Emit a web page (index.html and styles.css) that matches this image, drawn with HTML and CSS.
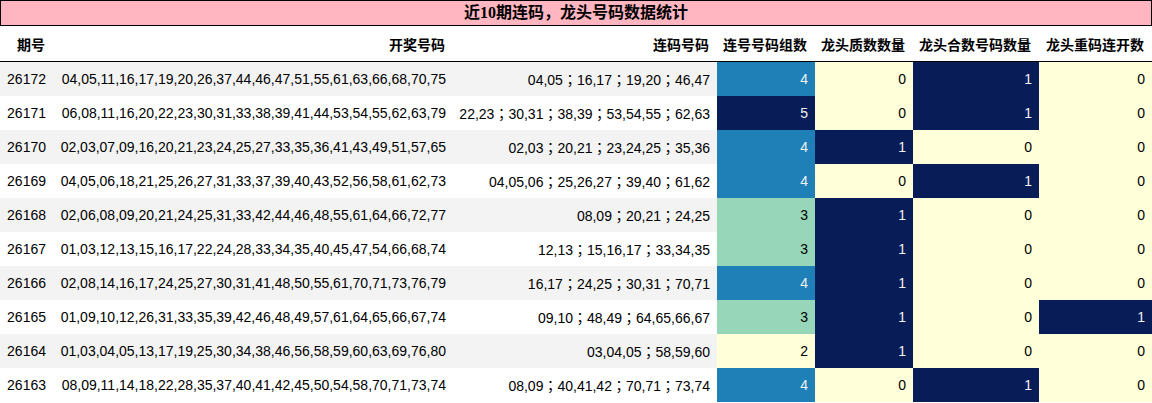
FILE: index.html
```html
<!DOCTYPE html>
<html lang="zh">
<head>
<meta charset="utf-8">
<link rel="stylesheet" href="styles.css">
</head>
<body>
<div class="title">近10期连码，龙头号码数据统计</div>
<table class="stats">
  <colgroup>
    <col class="c1"><col class="c2"><col class="c3"><col class="c4"><col class="c5"><col class="c6"><col class="c7">
  </colgroup>
  <thead>
    <tr><th>期号</th><th>开奖号码</th><th>连码号码</th><th>连号号码组数</th><th>龙头质数数量</th><th>龙头合数号码数量</th><th>龙头重码连开数</th></tr>
  </thead>
  <tbody>
    <tr><td>26172</td><td>04,05,11,16,17,19,20,26,37,44,46,47,51,55,61,63,66,68,70,75</td><td>04,05；16,17；19,20；46,47</td><td class="g4">4</td><td class="b0">0</td><td class="b1">1</td><td class="b0">0</td></tr>
    <tr><td>26171</td><td>06,08,11,16,20,22,23,30,31,33,38,39,41,44,53,54,55,62,63,79</td><td>22,23；30,31；38,39；53,54,55；62,63</td><td class="g5">5</td><td class="b0">0</td><td class="b1">1</td><td class="b0">0</td></tr>
    <tr><td>26170</td><td>02,03,07,09,16,20,21,23,24,25,27,33,35,36,41,43,49,51,57,65</td><td>02,03；20,21；23,24,25；35,36</td><td class="g4">4</td><td class="b1">1</td><td class="b0">0</td><td class="b0">0</td></tr>
    <tr><td>26169</td><td>04,05,06,18,21,25,26,27,31,33,37,39,40,43,52,56,58,61,62,73</td><td>04,05,06；25,26,27；39,40；61,62</td><td class="g4">4</td><td class="b0">0</td><td class="b1">1</td><td class="b0">0</td></tr>
    <tr><td>26168</td><td>02,06,08,09,20,21,24,25,31,33,42,44,46,48,55,61,64,66,72,77</td><td>08,09；20,21；24,25</td><td class="g3">3</td><td class="b1">1</td><td class="b0">0</td><td class="b0">0</td></tr>
    <tr><td>26167</td><td>01,03,12,13,15,16,17,22,24,28,33,34,35,40,45,47,54,66,68,74</td><td>12,13；15,16,17；33,34,35</td><td class="g3">3</td><td class="b1">1</td><td class="b0">0</td><td class="b0">0</td></tr>
    <tr><td>26166</td><td>02,08,14,16,17,24,25,27,30,31,41,48,50,55,61,70,71,73,76,79</td><td>16,17；24,25；30,31；70,71</td><td class="g4">4</td><td class="b1">1</td><td class="b0">0</td><td class="b0">0</td></tr>
    <tr><td>26165</td><td>01,09,10,12,26,31,33,35,39,42,46,48,49,57,61,64,65,66,67,74</td><td>09,10；48,49；64,65,66,67</td><td class="g3">3</td><td class="b1">1</td><td class="b0">0</td><td class="b1">1</td></tr>
    <tr><td>26164</td><td>01,03,04,05,13,17,19,25,30,34,38,46,56,58,59,60,63,69,76,80</td><td>03,04,05；58,59,60</td><td class="g2">2</td><td class="b1">1</td><td class="b0">0</td><td class="b0">0</td></tr>
    <tr><td>26163</td><td>08,09,11,14,18,22,28,35,37,40,41,42,45,50,54,58,70,71,73,74</td><td>08,09；40,41,42；70,71；73,74</td><td class="g4">4</td><td class="b0">0</td><td class="b1">1</td><td class="b0">0</td></tr>
  </tbody>
</table>
</body>
</html>
```
FILE: styles.css
```css
html, body {
  margin: 0;
  padding: 0;
  background: #ffffff;
}
body {
  width: 1152px;
}
.title {
  box-sizing: border-box;
  height: 26px;
  border: 1px solid #000;
  background: #ffb6c1;
  font-family: "Liberation Serif", "Noto Sans CJK SC", serif;
  font-weight: bold;
  font-size: 16px;
  line-height: 24px;
  text-align: center;
  color: #000;
}
.stats {
  width: 1152px;
  table-layout: fixed;
  border-collapse: collapse;
  font-family: "Liberation Sans", "Noto Sans CJK JP", sans-serif;
  font-size: 14px;
  color: #000;
}
.c1 { width: 53px; }
.c2 { width: 400px; }
.c3 { width: 264px; }
.c4 { width: 98px; }
.c5 { width: 98px; }
.c6 { width: 126px; }
.c7 { width: 113px; }
.stats th {
  height: 35px;
  padding: 0 8px 0 0;
  text-align: right;
  font-family: "Noto Sans CJK SC", sans-serif;
  font-weight: bold;
  font-size: 14px;
  border-bottom: 1px solid #000;
  white-space: nowrap;
}
.stats td {
  height: 34px;
  padding: 0 7px 0 0;
  text-align: right;
  white-space: nowrap;
}
.stats tbody tr:nth-child(odd) {
  background: #f3f3f3;
}
.stats tbody tr:nth-child(even) {
  background: #ffffff;
}
.stats td.g2, .stats td.b0 { background: #ffffd9; color: #000; }
.stats td.g3 { background: #97d6b9; color: #000; }
.stats td.g4 { background: #1f80b8; color: #f1f1f1; }
.stats td.g5, .stats td.b1 { background: #081d58; color: #f1f1f1; }
```
